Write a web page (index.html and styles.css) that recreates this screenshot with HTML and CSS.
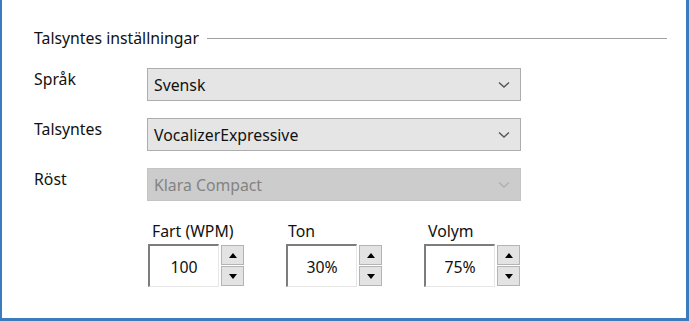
FILE: index.html
```html
<!DOCTYPE html>
<html lang="sv">
<head>
<meta charset="utf-8">
<title>Talsyntes inställningar</title>
<link rel="stylesheet" href="styles.css">
</head>
<body>
<div class="window">
  <div class="legend"><span class="legend-text">Talsyntes inställningar</span><span class="legend-line"></span></div>
  <div class="form">
    <div class="label">Språk</div>
    <div class="combo"><span>Svensk</span>
      <svg class="chev" width="12" height="8" viewBox="0 0 12 8"><path d="M1 1.5 L6 6 L11 1.5" fill="none" stroke="#555" stroke-width="1.4"/></svg>
    </div>
    <div class="label">Talsyntes</div>
    <div class="combo"><span>VocalizerExpressive</span>
      <svg class="chev" width="12" height="8" viewBox="0 0 12 8"><path d="M1 1.5 L6 6 L11 1.5" fill="none" stroke="#555" stroke-width="1.4"/></svg>
    </div>
    <div class="label">Röst</div>
    <div class="combo disabled"><span>Klara Compact</span>
      <svg class="chev" width="12" height="8" viewBox="0 0 12 8"><path d="M1 1.5 L6 6 L11 1.5" fill="none" stroke="#b0b0b0" stroke-width="1.4"/></svg>
    </div>
  </div>
  <div class="spinners">
    <div class="spin-group">
      <div class="spin-label">Fart (WPM)</div>
      <div class="spin">
        <div class="spin-input">100</div>
        <div class="spin-buttons">
          <div class="spin-btn"><svg width="8" height="5" viewBox="0 0 8 5"><path d="M0 5 L4 0 L8 5 Z" fill="#000"/></svg></div>
          <div class="spin-btn"><svg width="8" height="5" viewBox="0 0 8 5"><path d="M0 0 L4 5 L8 0 Z" fill="#000"/></svg></div>
        </div>
      </div>
    </div>
    <div class="spin-group">
      <div class="spin-label ton">Ton</div>
      <div class="spin">
        <div class="spin-input">30%</div>
        <div class="spin-buttons">
          <div class="spin-btn"><svg width="8" height="5" viewBox="0 0 8 5"><path d="M0 5 L4 0 L8 5 Z" fill="#000"/></svg></div>
          <div class="spin-btn"><svg width="8" height="5" viewBox="0 0 8 5"><path d="M0 0 L4 5 L8 0 Z" fill="#000"/></svg></div>
        </div>
      </div>
    </div>
    <div class="spin-group">
      <div class="spin-label">Volym</div>
      <div class="spin">
        <div class="spin-input">75%</div>
        <div class="spin-buttons">
          <div class="spin-btn"><svg width="8" height="5" viewBox="0 0 8 5"><path d="M0 5 L4 0 L8 5 Z" fill="#000"/></svg></div>
          <div class="spin-btn"><svg width="8" height="5" viewBox="0 0 8 5"><path d="M0 0 L4 5 L8 0 Z" fill="#000"/></svg></div>
        </div>
      </div>
    </div>
  </div>
</div>
</body>
</html>
```
FILE: styles.css
```css
html, body {
  margin: 0;
  padding: 0;
  background: #ffffff;
}
body {
  font-family: "Noto Sans", "Open Sans", sans-serif;
  font-size: 15.8px;
  color: #111;
}
.window {
  width: 689px;
  height: 321px;
  box-sizing: border-box;
  border-left: 2px solid #3a7cc0;
  border-right: 3px solid #3a7cc0;
  border-bottom: 3px solid #3a7cc0;
  padding: 28px 19px 0 32px;
  display: flex;
  flex-direction: column;
}
.legend {
  display: flex;
  align-items: center;
  height: 20px;
}
.legend-text {
  line-height: 20px;
}
.legend-line {
  flex: 1;
  height: 1px;
  background: #a0a0a0;
  margin-left: 8px;
}
.form {
  margin-top: 20px;
  display: grid;
  grid-template-columns: 113px 374px;
  row-gap: 17px;
}
.label {
  line-height: 20px;
  padding-top: 1px;
}
.combo {
  height: 33px;
  box-sizing: border-box;
  border: 1px solid #adadad;
  background: #e5e5e5;
  display: flex;
  align-items: center;
  justify-content: space-between;
  padding: 0 10px 0 6px;
}
.combo span {
  padding-top: 1px;
}
.combo.disabled {
  background: #cccccc;
  border-color: #c4c4c4;
  color: #838383;
}
.spinners {
  margin-top: 20px;
  margin-left: 114px;
  display: flex;
  gap: 42px;
}
.spin-group {
  display: flex;
  flex-direction: column;
}
.spin-label {
  padding-left: 4px;
  line-height: 20px;
  height: 23px;
}
.spin-label.ton {
  padding-left: 2px;
}
.spin {
  display: flex;
  gap: 2px;
}
.spin-input {
  width: 71px;
  height: 43px;
  box-sizing: border-box;
  border-top: 2px solid #7d7d7d;
  border-left: 2px solid #7d7d7d;
  border-right: 1px solid #e6e6e6;
  border-bottom: 1px solid #e6e6e6;
  background: #fff;
  display: flex;
  align-items: center;
  justify-content: center;
  padding-top: 1px;
}
.spin-buttons {
  display: flex;
  flex-direction: column;
  gap: 1px;
  padding-top: 1px;
}
.spin-btn {
  width: 23px;
  height: 20px;
  box-sizing: border-box;
  border: 1px solid #b4b4b4;
  background: #e3e3e3;
  display: flex;
  align-items: center;
  justify-content: center;
}
```
